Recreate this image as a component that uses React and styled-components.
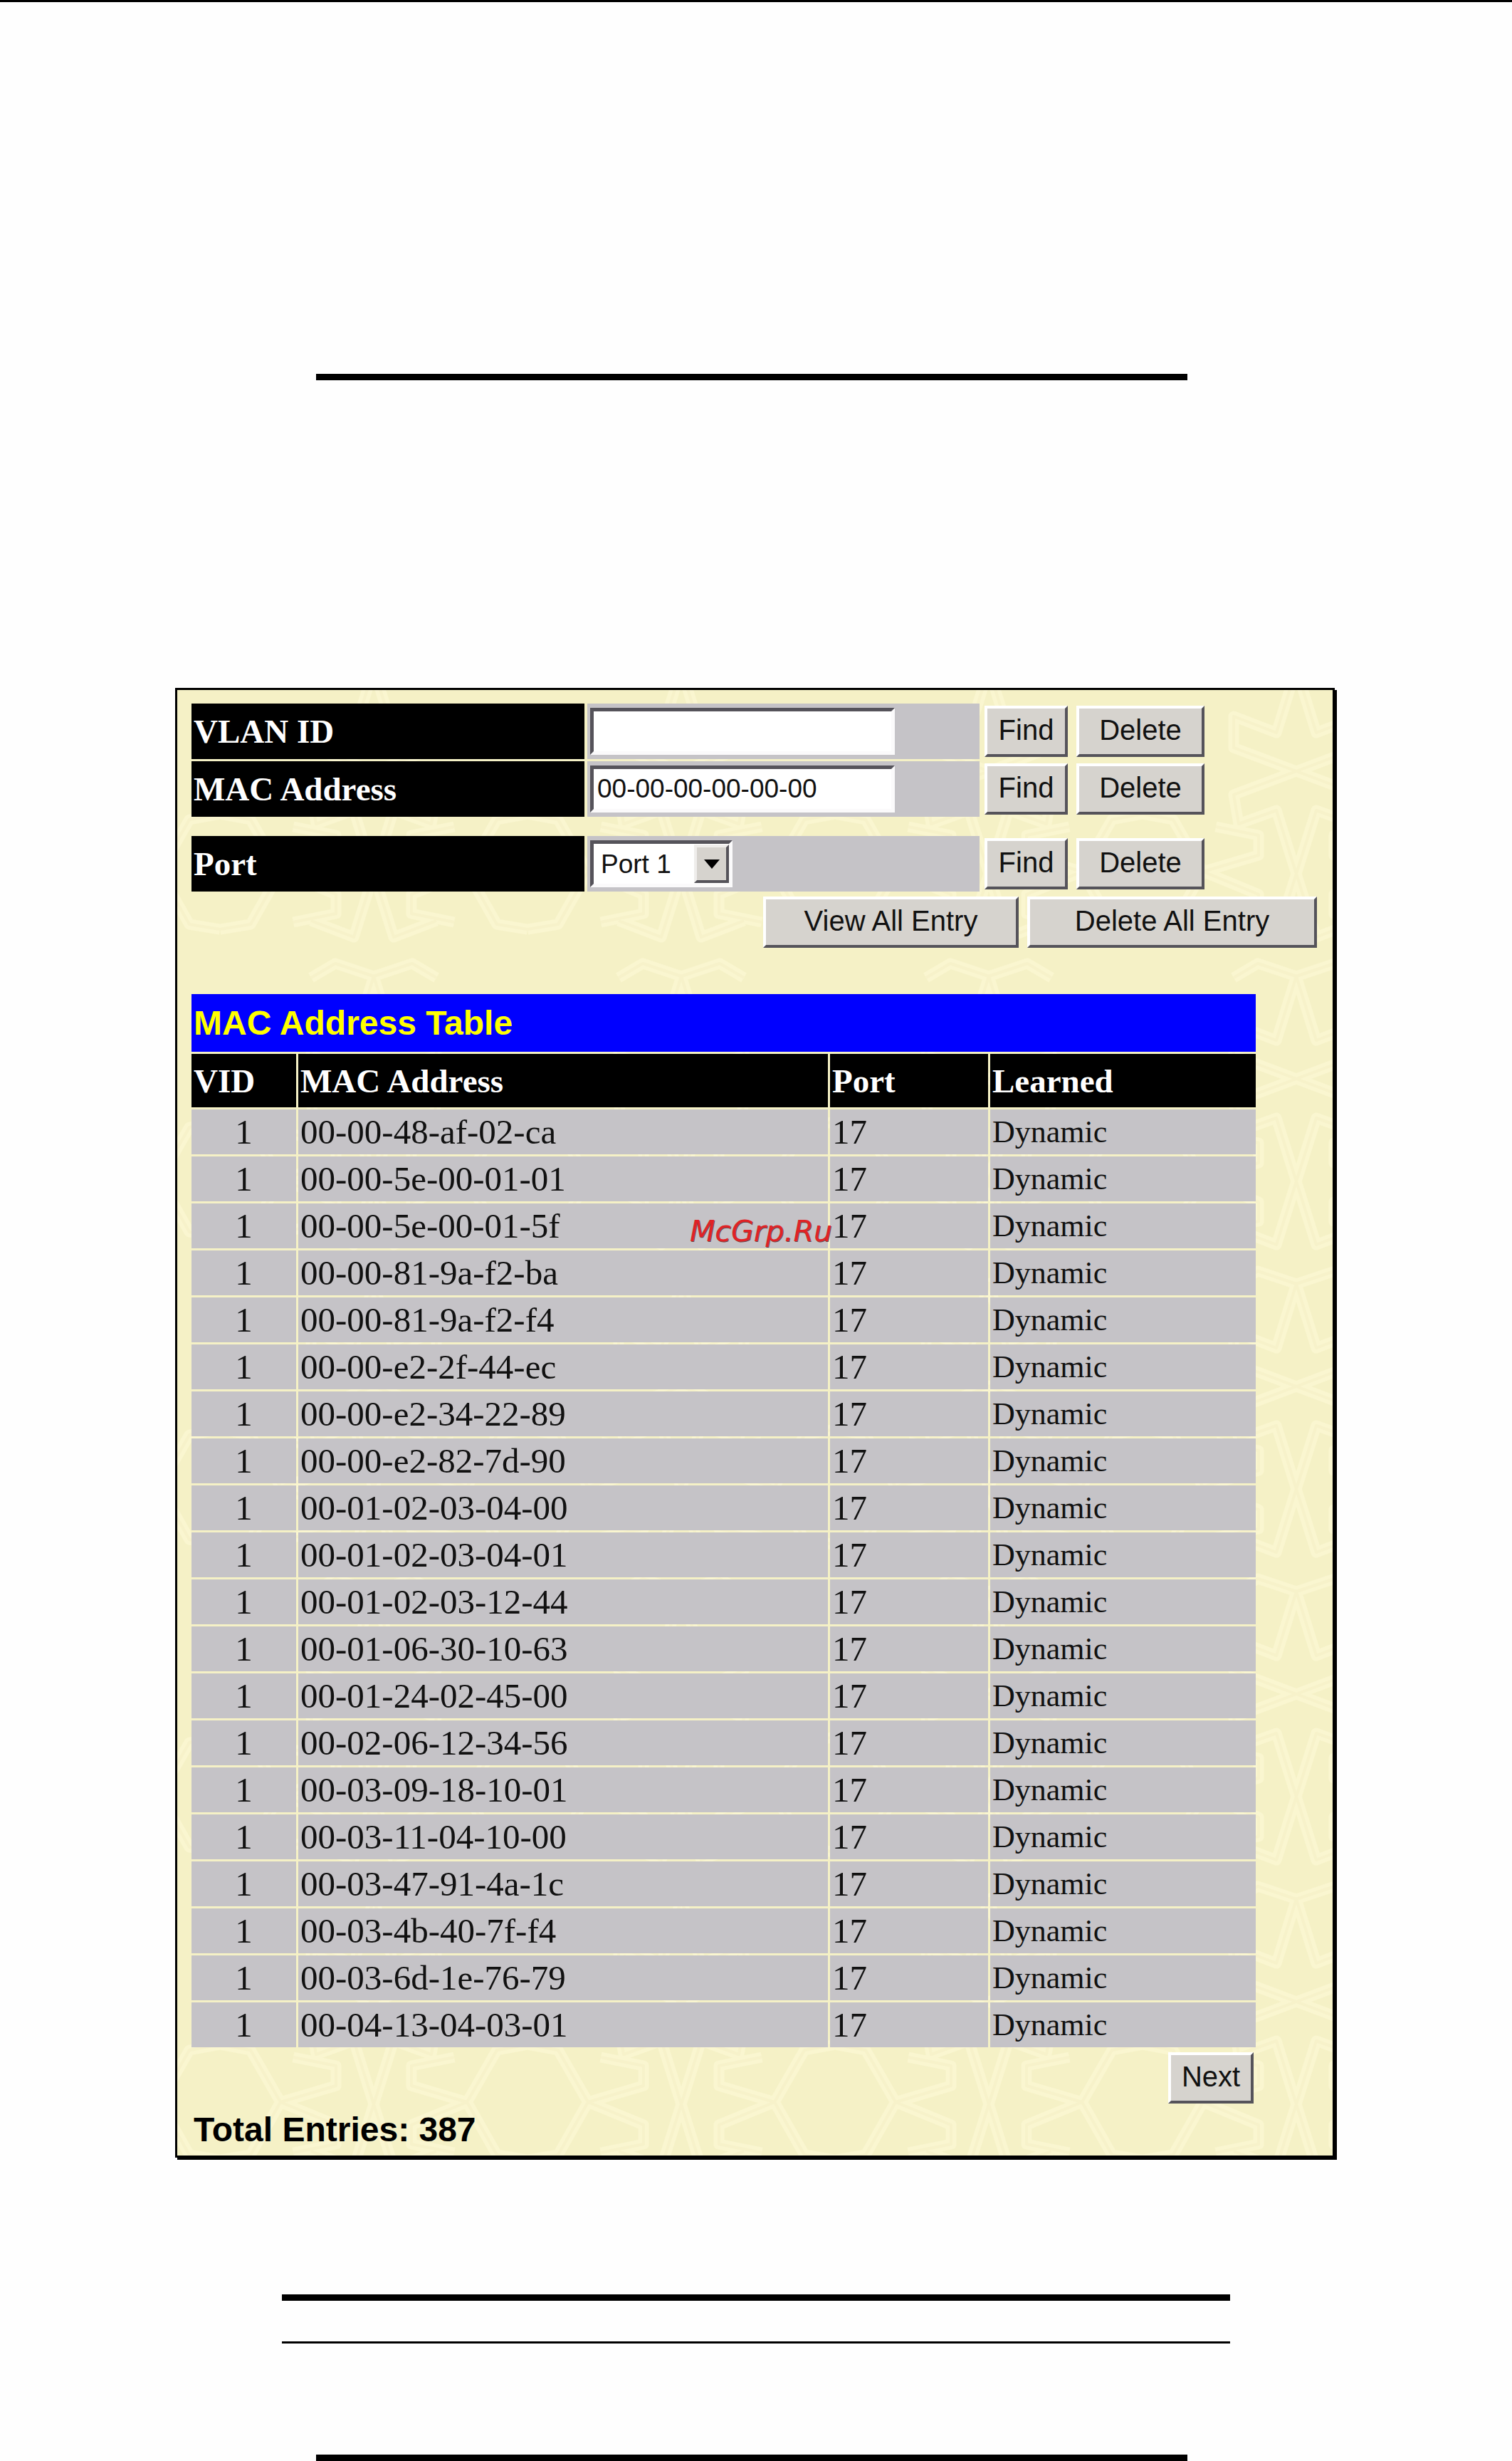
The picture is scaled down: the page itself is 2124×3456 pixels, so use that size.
import styled, { createGlobalStyle } from "styled-components"

const GlobalStyle = createGlobalStyle`
body {
  margin: 0;
  background: #fefefe;
  color: #000;
}
* {
  box-sizing: border-box;
}
`

// one star of the wallpaper, repeated above and below so the tile joins up
const half = "M0 0L88 33L81 74L28 55L0 144L-28 233L-88 210M0 144L28 55M131 141L53 118V90L113 78M131 141L53 173V200L113 212M131 141L173 68L216 60M131 141L173 215L216 222M0 288L54 270L88 290M0 288L28 378L88 355L88 399L0 432"
const star = `<path d='${half}'/><path transform='scale(-1 1)' d='${half}'/>`
const stars = [-432, 0].map((y) => `<g transform='translate(0 ${y})'>${star}</g>`).join("")
const tile = `<svg xmlns='http://www.w3.org/2000/svg' width='432' height='432' viewBox='-216 -216 432 432' fill='none' stroke-linejoin='round'><g stroke='#faf6d0' stroke-width='15'>${stars}</g><g stroke='#f7f2ca' stroke-width='4'>${stars}</g></svg>`

const Page = styled.main`
display: flex;
flex-direction: column;
`
const Rule = styled.hr`
border: 0;
background: #000;
height: ${({ $thin }) => ($thin ? "3px" : "9px")};
margin: ${({ $gap }) => $gap || 0}px ${({ $right }) => $right || 0}px 0 ${({ $left }) => $left || 0}px;
`
const Panel = styled.section`
margin: 432px 249px 0 246px;
padding: 19px 22px 9px 17px;
border: 3px solid #000;
box-shadow: 3px 3px 0 #000;
background: #f5f1c6 url("data:image/svg+xml,${encodeURIComponent(tile).replace(/'/g, "%27").replace(/\(/g, "%28").replace(/\)/g, "%29")}") 60px -102px;
`
const Form = styled.form`
display: flex;
flex-direction: column;
gap: 3px;
padding-left: 3px;
`
const Row = styled.div`
display: grid;
grid-template-columns: 552px 1fr 470px;
column-gap: 4px;
height: 78px;
margin-top: ${({ $apart }) => ($apart ? "24px" : "0")};
`
const Label = styled.label`
display: flex;
align-items: center;
padding-left: 3px;
background: #000;
color: #fff;
font: bold 47px "Liberation Serif", serif;
`
const Field = styled.div`
display: flex;
align-items: center;
padding-left: 4px;
background: #c5c3c7;
`
const TextInput = styled.input`
width: 428px;
height: 66px;
padding: 0 5px;
border: 5px solid;
border-color: #55535a #fbfafb #fbfafb #55535a;
border-radius: 0;
background: #fff;
color: #111;
font: 37px "Liberation Sans", sans-serif;
`
const SelectBox = styled.div`
position: relative;
`
const Select = styled.select`
display: block;
appearance: none;
width: 200px;
height: 66px;
padding: 0 10px;
border: 5px solid;
border-color: #55535a #fbfafb #fbfafb #55535a;
border-radius: 0;
background: #fff;
color: #111;
font: 37px "Liberation Sans", sans-serif;
`
const Arrow = styled.span`
position: absolute;
top: 6px;
right: 5px;
display: flex;
align-items: center;
justify-content: center;
width: 49px;
height: 54px;
border: 4px solid;
border-color: #efedeb #55535a #55535a #efedeb;
background: #d6d3ce;
pointer-events: none;
`
const Buttons = styled.div`
display: flex;
align-items: center;
gap: 12px;
padding-left: 3px;
`
const Button = styled.button`
width: ${({ $width }) => $width}px;
height: 72px;
padding: 0 0 4px;
border: 4px solid;
border-color: #fff #55535a #55535a #fff;
border-radius: 0;
background: #d6d3ce;
color: #111;
font: 40px "Liberation Sans", sans-serif;
white-space: nowrap;
`
const Actions = styled.div`
display: flex;
justify-content: flex-end;
gap: 12px;
margin-top: 4px;
`
const TableBox = styled.div`
position: relative;
width: calc(100% - 83px);
margin-top: 62px;
`
const Table = styled.table`
width: 100%;
table-layout: fixed;
border-spacing: 3px;
`
const Col = styled.col`
width: ${({ $width }) => $width || "auto"};
`
const Title = styled.th`
height: 81px;
padding: 0 3px;
background: #00f;
color: #ff0;
text-align: left;
font: bold 48px "Liberation Sans", sans-serif;
`
const Head = styled.th`
height: 75px;
padding: 0 3px;
background: #000;
color: #fff;
text-align: left;
font: bold 47px "Liberation Serif", serif;
`
const Cell = styled.td`
height: 63px;
padding: 0 3px;
background: #c5c3c7;
color: #111;
text-align: ${({ $align }) => $align || "left"};
font: ${({ $small }) => ($small ? "44px" : "49px")} "Liberation Serif", serif;
line-height: 54px;
white-space: nowrap;
`
const Watermark = styled.span`
position: absolute;
top: 312px;
left: 703px;
color: #e02226;
text-shadow: 1px 1px 0 #6b4a4c;
font: italic 41px "DejaVu Sans", sans-serif;
line-height: 48px;
`
const Pager = styled.div`
display: flex;
justify-content: flex-end;
margin: 4px 89px 0 0;
`
const Total = styled.p`
margin: 10px 0 0;
padding-left: 6px;
font: bold 48px "Liberation Sans", sans-serif;
line-height: 54px;
`

const addresses = [
    "00-00-48-af-02-ca",
    "00-00-5e-00-01-01",
    "00-00-5e-00-01-5f",
    "00-00-81-9a-f2-ba",
    "00-00-81-9a-f2-f4",
    "00-00-e2-2f-44-ec",
    "00-00-e2-34-22-89",
    "00-00-e2-82-7d-90",
    "00-01-02-03-04-00",
    "00-01-02-03-04-01",
    "00-01-02-03-12-44",
    "00-01-06-30-10-63",
    "00-01-24-02-45-00",
    "00-02-06-12-34-56",
    "00-03-09-18-10-01",
    "00-03-11-04-10-00",
    "00-03-47-91-4a-1c",
    "00-03-4b-40-7f-f4",
    "00-03-6d-1e-76-79",
    "00-04-13-04-03-01",
]

const SearchRow = ({ id, label, apart, children }) => (
    <Row $apart={apart}>
        <Label htmlFor={id}>{label}</Label>
        <Field>{children}</Field>
        <Buttons>
            <Button type="button" $width={117}>Find</Button>
            <Button type="button" $width={180}>Delete</Button>
        </Buttons>
    </Row>
)

const App = () => {
    return (
        <Page>
            <GlobalStyle />
            <Rule $thin />
            <Rule $gap={522} $left={444} $right={456} />

            <Panel>
                <Form>
                    <SearchRow id="vlan" label="VLAN ID">
                        <TextInput id="vlan" type="text" />
                    </SearchRow>
                    <SearchRow id="mac" label="MAC Address">
                        <TextInput id="mac" type="text" defaultValue="00-00-00-00-00-00" />
                    </SearchRow>
                    <SearchRow id="port" label="Port" apart>
                        <SelectBox>
                            <Select id="port">
                                <option>Port 1</option>
                            </Select>
                            <Arrow>
                                <svg width="22" height="13" viewBox="0 0 22 13">
                                    <path d="M0 0H22L11 13Z" />
                                </svg>
                            </Arrow>
                        </SelectBox>
                    </SearchRow>
                    <Actions>
                        <Button type="button" $width={359}>View All Entry</Button>
                        <Button type="button" $width={407}>Delete All Entry</Button>
                    </Actions>
                </Form>

                <TableBox>
                    <Table>
                        <colgroup>
                            <Col $width="147px" />
                            <Col />
                            <Col $width="222px" />
                            <Col $width="373px" />
                        </colgroup>
                        <thead>
                            <tr>
                                <Title colSpan={4}>MAC Address Table</Title>
                            </tr>
                            <tr>
                                <Head>VID</Head>
                                <Head>MAC Address</Head>
                                <Head>Port</Head>
                                <Head>Learned</Head>
                            </tr>
                        </thead>
                        <tbody>
                            {addresses.map((address) => (
                                <tr key={address}>
                                    <Cell $align="center">1</Cell>
                                    <Cell>{address}</Cell>
                                    <Cell>17</Cell>
                                    <Cell $small>Dynamic</Cell>
                                </tr>
                            ))}
                        </tbody>
                    </Table>
                    <Watermark>McGrp.Ru</Watermark>
                </TableBox>

                <Pager>
                    <Button type="button" $width={120}>Next</Button>
                </Pager>
                <Total>Total Entries: 387</Total>
            </Panel>

            <Rule $gap={192} $left={396} $right={396} />
            <Rule $thin $gap={57} $left={396} $right={396} />
            <Rule $gap={156} $left={444} $right={456} />
        </Page>
    )
}

export default App
